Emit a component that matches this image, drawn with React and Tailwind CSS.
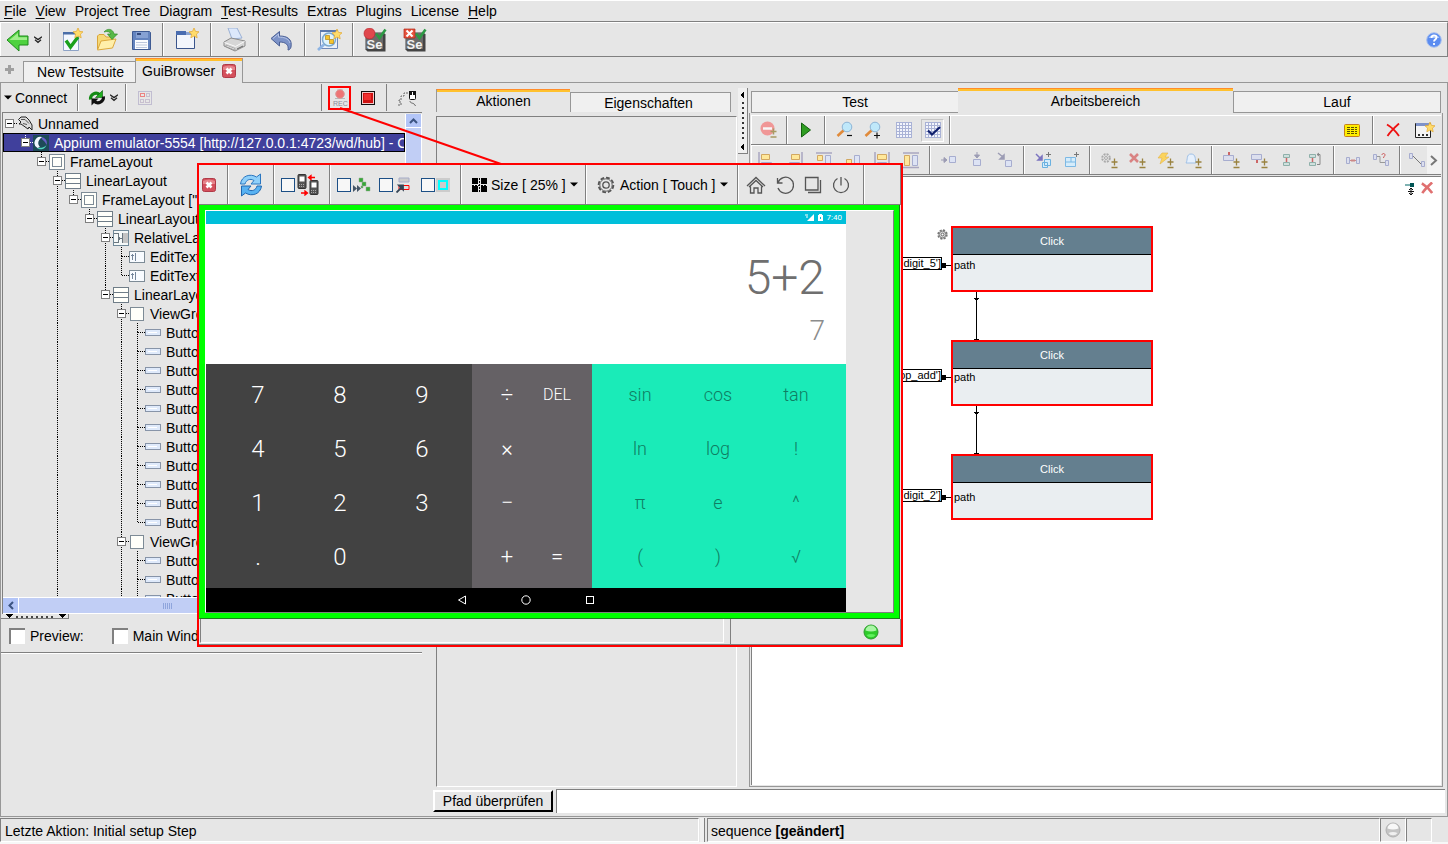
import React from "react";

function Svg({ w = 24, h = 24, vb, children, className = "", crisp = false }) {
  return (
    <svg
      width={w}
      height={h}
      viewBox={vb || `0 0 ${w} ${h}`}
      fill="none"
      shapeRendering={crisp ? "crispEdges" : "auto"}
      className={"shrink-0 " + className}
      aria-hidden="true"
    >
      {children}
    </svg>
  );
}

const STAR = "M5 0l1.5 3.4 3.5.4-2.6 2.4.8 3.6L5 8 1.8 9.8l.8-3.6L0 3.8l3.5-.4z";

function Star({ x, y }) {
  return <path d={STAR} transform={`translate(${x} ${y})`} fill="#ffdc6b" stroke="#e3a62c" strokeWidth=".7" />;
}

/* ---------- main toolbar icons ---------- */
const BackIcon = () => (
  <Svg>
    <path d="M1 12 13 2v6h9v9h-9v6z" fill="#4fd23f" stroke="#1f8a1c" />
    <path d="M3.500 12 12 5v4.200h9V12z" fill="#b4f5a0" opacity=".8" />
  </Svg>
);
const DoubleChevron = () => (
  <Svg w={8} h={8}>
    <path d="M0 .8 4 3.600 8 .8M1 3.800 4 6.400 7 3.800" stroke="#222" strokeWidth="1.300" />
  </Svg>
);
const NewCheckIcon = () => (
  <Svg>
    <path d="M3.500 4.500h15v18h-15z" fill="#f4f8ff" stroke="#8ea3c6" />
    <path d="M3 4h16v2.500H3z" fill="#4a6ea8" />
    <path d="m6 12.500 4.500 6.500L18 9" stroke="#19a01c" strokeWidth="3.400" />
    <Star x={13} y={0} />
  </Svg>
);
const OpenIcon = () => (
  <Svg>
    <path d="M2.500 21V8l1.500-1.500h5L11 9h7v4" fill="#f6d977" stroke="#d9a53a" />
    <path d="M2.500 22 6 13l15-2-3.500 9z" fill="#ffefaa" stroke="#dca83c" />
    <path d="M9 4c3-4 9-3.500 10 2h3.500L17 11.500 12.500 6H16c-1-2.500-4-3-7-2z" fill="#58b947" stroke="#2d8b25" strokeWidth=".7" />
  </Svg>
);
const SaveIcon = () => (
  <Svg>
    <path d="M2.500 3.500h17l1 1v17h-18z" fill="#6484bf" stroke="#3f5b93" />
    <path d="M6 4h12v6H6z" fill="#86a1d3" />
    <path d="M5 12h13v9H5z" fill="#fbfcff" />
    <path d="M6 14.500h11M6 17h11M6 19.500h11" stroke="#bcc7dd" />
    <path d="M7 6h4" stroke="#33497c" strokeWidth="2" />
  </Svg>
);
const NewWindowIcon = () => (
  <Svg>
    <path d="M1.500 4.500h18v16h-18z" fill="#f3f6fc" stroke="#3a558c" />
    <path d="M1 3h10v4H1z" fill="#4a6db0" />
    <path d="M11 4h8v3h-8z" fill="#8da5d2" />
    <Star x={14} y={0} />
  </Svg>
);
const PrinterIcon = () => (
  <Svg>
    <path d="M5 0h9l5 10-10 1z" fill="#dce8fb" stroke="#9ab0d4" />
    <path d="m1 14 7-4 14 3v5l-10 5L1 18z" fill="#d6d6d6" stroke="#8c8c8c" />
    <path d="m1.500 14.500 11 4 9-5" stroke="#fafafa" />
    <path d="m3 17 9 3.500v1.500l-9-3.500z" fill="#f5f5f5" stroke="#888" strokeWidth=".6" />
    <path d="m14 21 6-3" stroke="#666" />
  </Svg>
);
const UndoIcon = () => (
  <Svg>
    <path d="M1 10.500 9.500 3.500V8C17 8 22.500 11 21 19c-.4 2-2 3-3 3C19 17 16 14 9.500 14v4z" fill="#7d93c8" stroke="#4a5f95" />
    <path d="M3 10.500 8.500 6v3.200C14 9 18.500 10.500 20 15" stroke="#b6c4e6" />
  </Svg>
);
const SearchDocIcon = () => (
  <Svg w={26}>
    <path d="M4.500 2.500h17v18h-17z" fill="#eaf0fb" stroke="#7089b8" />
    <path d="M4 2h18v2H4z" fill="#5b78ad" />
    <circle cx="13" cy="11.500" r="6.500" fill="#dff3fc" stroke="#7ba9cf" strokeWidth="1.500" />
    <path d="M9.500 7.500h4v4h-4zM13.500 11.500h4v4h-4z" fill="#f7c52c" stroke="#b88413" strokeWidth=".7" />
    <path d="m8 16.500-6 5.500" stroke="#8db4e4" strokeWidth="2.800" />
    <Star x={16} y={1} />
  </Svg>
);
const SeIcon = ({ stop }) => (
  <Svg>
    <path d="M2.500 4.500h18l2 2v17h-18l-2-2z" fill="#444" />
    <path d="M3 5h17v16H3z" fill="#6a6a6a" />
    <text x="3.500" y="20.500" fontSize="13" fontWeight="bold" fontFamily="Liberation Sans, sans-serif" fill="#f2f2f2">
      Se
    </text>
    {stop ? (
      <>
        <path d="M1 1h11v9H1z" fill="#e5533d" stroke="#b32717" strokeWidth=".7" />
        <path d="m3.500 2.500 6 6M9.500 2.500l-6 6" stroke="#fff" strokeWidth="2" />
      </>
    ) : (
      <circle cx="6.500" cy="5.500" r="5.500" fill="#e0484d" stroke="#b3222a" strokeWidth=".6" />
    )}
    <path d="m13 5.500 3.500 4.500L22.500 1.500" stroke="#2d9a45" strokeWidth="2.600" />
  </Svg>
);
const HelpIcon = () => (
  <Svg w={16} h={16}>
    <circle cx="8" cy="8" r="7.300" fill="#5b8cf0" stroke="#a9c1ef" />
    <path d="M2.500 6a6 5 0 0 1 11 0z" fill="#a9c6fb" />
    <path d="M5.500 6c0-3.500 5-3.500 5-.5 0 2-2.500 2-2.500 4M8 11v2" stroke="#fff" strokeWidth="1.800" />
  </Svg>
);
const CloseBox = () => (
  <Svg w={14} h={14}>
    <rect x=".5" y=".5" width="13" height="13" rx="2" fill="#d4505c" stroke="#b03a48" />
    <path d="M1 3q6-3 12 0v3H1z" fill="#ee9aa0" opacity=".7" />
    <path d="m4.500 4.500 5 5M9.500 4.500l-5 5" stroke="#fff" strokeWidth="2.600" />
  </Svg>
);

/* ---------- connection toolbar icons ---------- */
const Triangle = () => (
  <Svg w={8} h={5}>
    <path d="M0 .5h8L4 4.500z" fill="#000" />
  </Svg>
);
const RefreshGreen = () => (
  <Svg w={18} h={16}>
    <path d="M2.500 9.500C2 4 8 1.500 11.500 4.500" stroke="#148a14" strokeWidth="3.200" />
    <path d="M14.500.5v7H7.500z" fill="#1fae1f" stroke="#0a5a0a" strokeWidth=".6" />
    <path d="M15.500 6.500c.5 5.500-5.500 8-9 5" stroke="#101010" strokeWidth="3" />
    <path d="M3.500 15.500v-7h7z" fill="#101010" />
  </Svg>
);
const GridRed = () => (
  <Svg w={14} h={14} crisp className="opacity-60">
    <path d="M.5.5h13v13H.5z" stroke="#a9a3c4" />
    <path d="M2.500 2.500h4v3h-4z" stroke="#f04040" />
    <path d="M8.500 2.500h3v3h-3zM2.500 8.500h3v3h-3zM7.500 8.500h4v3h-4z" stroke="#b5a6c0" />
  </Svg>
);
const RecIcon = () => (
  <Svg w={16} h={18}>
    <path d="M5 1h6M3 9.500h10" stroke="#b9b9b9" />
    <circle cx="8" cy="5" r="4.300" fill="#ee7474" stroke="#d99" />
    <text x="1" y="16.500" fontSize="7" fontFamily="Liberation Sans, sans-serif" fill="#8c8c98">
      REC
    </text>
  </Svg>
);
const StopIcon = () => (
  <Svg w={14} h={14} crisp>
    <path d="M.5.5h13v13H.5z" fill="#f3c8c8" stroke="#111" />
    <path d="M2 2h10v10H2z" fill="#cf1212" />
    <path d="M3 3h7v6H3z" fill="#f03030" />
  </Svg>
);
const MouseIcon = () => (
  <Svg w={20} h={18}>
    <path d="M1 16h3v-3H2v-2h2V7h3V4h5" stroke="#666" strokeDasharray="2 1" />
    <rect x="12.500" y="2.500" width="6" height="8" rx="1" fill="#fff" stroke="#111" />
    <path d="M12 2h7v4h-7z" fill="#111" />
    <path d="M15.500 3v3" stroke="#fff" />
    <path d="M13 12c0 3 4 1 5.500 5" stroke="#666" />
  </Svg>
);

/* ---------- tree ---------- */
const TREE_ICONS = {
  root: (
    <Svg w={16} h={16}>
      <path d="M1.500 3.500 4 1h5l3 3 3 5v5l-3-3-1 2-7-5H2l2-2z" fill="#ddd" stroke="#222" />
      <path d="M4 3.500h4l4 4M6 7.500l4 1" stroke="#555" />
    </Svg>
  ),
  appium: (
    <Svg w={16} h={16}>
      <path d="M0 0h16v16H0z" fill="#1e4a58" />
      <path d="M8 2a6 6 0 0 1 5.500 8c-1-4-4-4-5.500-8z" fill="#6a5fc8" />
      <path d="M13.500 10A6 6 0 0 1 4 13c3 0 7 0 9.500-3z" fill="#4fd8c0" />
      <path d="M4.500 13A6 6 0 0 1 9 2C5 5 4 9 7 12z" fill="#f3f8ff" />
    </Svg>
  ),
  frame: (
    <Svg w={16} h={16} crisp>
      <path d="M.5.5h15v15H.5z" fill="#fffffa" stroke="#7d8b96" />
      <path d="M3.500 3.500h9v9h-9z" stroke="#7d8b96" />
    </Svg>
  ),
  linear: (
    <Svg w={16} h={16} crisp>
      <path d="M.5.5h15v15H.5zM0 5.500h16M0 10.500h16" fill="#fffffa" stroke="#6f7d88" />
    </Svg>
  ),
  relative: (
    <Svg w={16} h={16} crisp>
      <path d="M.5.5h15v15H.5z" fill="#f4f8f8" stroke="#6f8898" />
      <path d="M10 3h5v10h-5z" fill="#c3c3c3" />
      <path d="M1 3.500h4v9H1M5 8.500h4M9.500 3v10M6.500 7v3" stroke="#6a7780" />
    </Svg>
  ),
  edit: (
    <Svg w={16} h={12} crisp>
      <path d="M.5.5h15v11H.5z" fill="#f8fbff" stroke="#7d8b96" />
      <path d="M3.500 3v6M2 4.500h3M6.500 2v8" stroke="#75869c" />
    </Svg>
  ),
  group: (
    <Svg w={16} h={16} crisp>
      <path d="M1.500 1.500h13v13h-13z" fill="#fffffa" stroke="#7d8b96" />
    </Svg>
  ),
  button: (
    <Svg w={16} h={8} crisp>
      <path d="M.5.5h15v6H.5z" fill="#dfeafb" stroke="#8794a8" />
      <path d="M3 3h9" stroke="#fff" />
    </Svg>
  ),
};

const BUTTON_ROW = { depth: 8, icon: "button", label: "Button", guides: [3, 7], more: true };
const TREE = [
  { depth: 0, icon: "root", label: "Unnamed", open: true, guides: [] },
  { depth: 1, icon: "appium", label: "Appium emulator-5554 [http://127.0.0.1:4723/wd/hub] - C", open: true, guides: [], selected: true },
  { depth: 2, icon: "frame", label: "FrameLayout", open: true, guides: [] },
  { depth: 3, icon: "linear", label: "LinearLayout", open: true, guides: [], more: true },
  { depth: 4, icon: "frame", label: 'FrameLayout ["', open: true, guides: [3] },
  { depth: 5, icon: "linear", label: "LinearLayout", open: true, guides: [3] },
  { depth: 6, icon: "relative", label: "RelativeLayout", open: true, guides: [3], more: true },
  { depth: 7, icon: "edit", label: "EditText", guides: [3, 6], more: true },
  { depth: 7, icon: "edit", label: "EditText", guides: [3, 6] },
  { depth: 6, icon: "linear", label: "LinearLayout", open: true, guides: [3] },
  { depth: 7, icon: "group", label: "ViewGroup", open: true, guides: [3], more: true },
  ...Array.from({ length: 10 }, () => BUTTON_ROW),
  { ...BUTTON_ROW, more: false },
  { depth: 7, icon: "group", label: "ViewGroup", open: true, guides: [3], more: true },
  BUTTON_ROW,
  BUTTON_ROW,
  BUTTON_ROW,
];

function TreeRow({ row, first }) {
  const line = row.selected ? "#fff" : "#000";
  return (
    <div role="treeitem" aria-selected={!!row.selected} className={"flex h-[19px] shrink-0 items-center whitespace-nowrap " + (row.selected ? "bg-[#40409c] text-white outline outline-1 -outline-offset-1 outline-black" : "")}>
      {Array.from({ length: row.depth }, (_, i) => (
        <Svg key={i} w={16} h={19} crisp>
          {row.guides.includes(i) && <path d="M6.500 0v19" stroke="#000" strokeDasharray="1 1" />}
        </Svg>
      ))}
      <Svg w={14} h={19} crisp>
        {!first && <path d="M6.500 0v9" stroke={line} strokeDasharray="1 1" />}
        {row.more && <path d="M6.500 9v10" stroke="#000" strokeDasharray="1 1" />}
        <path d="M7 9.500h7" stroke={line} strokeDasharray="1 1" />
        {row.open && (
          <>
            <path d="M2.500 5.500h8v8h-8z" fill="#fff" stroke="#808080" />
            <path d="M4 9.500h5" stroke="#000" />
          </>
        )}
      </Svg>
      {TREE_ICONS[row.icon]}
      <span className="pl-[5px]">{row.label}</span>
    </div>
  );
}

/* ---------- workspace toolbar icons ---------- */
const RemoveIcon = () => (
  <Svg w={18} h={18} className="opacity-70">
    <circle cx="7.500" cy="7.500" r="7" fill="#f57676" />
    <path d="M3 7.500h9" stroke="#fff" strokeWidth="2.500" />
    <path d="M13.500 7.500v6M10.500 10.500h6M10.500 16h6" stroke="#8f7a2c" strokeWidth="1.500" />
  </Svg>
);
const PlayIcon = () => (
  <Svg w={12} h={16}>
    <path d="M1.500 1v14L10.500 8z" fill="#2f9d22" stroke="#14600f" />
  </Svg>
);
const Zoom = ({ plus }) => (
  <Svg w={18} h={18}>
    <path d="m8 9-6.500 6" stroke="#e08a3a" strokeWidth="2.600" />
    <circle cx="11" cy="6" r="4.800" fill="#bfe8fa" stroke="#8db4d6" />
    <path d={plus ? "M10 14.500h6M13 11.500v6" : "M11 14.500h5"} stroke="#111" strokeWidth="1.200" />
  </Svg>
);
const GridIcon = ({ check }) => (
  <Svg w={16} h={16} crisp>
    <path
      d="M.5.5h15v15H.5zM3.500 0v16M6.500 0v16M9.500 0v16M12.500 0v16M0 3.500h16M0 6.500h16M0 9.500h16M0 12.500h16"
      fill="#f3f5fc"
      stroke="#a9b2d6"
    />
    {check && <path d="m3 8.500 4 4L15 5" stroke="#10206e" strokeWidth="2.200" shapeRendering="auto" />}
  </Svg>
);
const NoteIcon = () => (
  <Svg w={16} h={13}>
    <rect x=".5" y=".5" width="15" height="12" rx="1" fill="#ffee00" stroke="#c47f1e" />
    <path d="M3 3.500h10M3 5.500h10M3 7.500h10M3 9.500h10" stroke="#5c5200" strokeDasharray="3 1" />
  </Svg>
);
const RedX = ({ s = 14, soft }) => (
  <Svg w={s} h={s} vb="0 0 14 14">
    <path d="M1 1.500c5 3 9 7 12 11.500M13 .5C8 5 4 9 1.500 13" stroke={soft ? "#e07070" : "#ee1111"} strokeWidth={soft ? 3 : 1.800} />
  </Svg>
);
const DotsWindow = () => (
  <Svg w={20} h={16}>
    <path d="M.5 1.500h15v14H.5z" fill="#f4f4f4" stroke="#222" />
    <path d="M1 1h14v3H1z" fill="#7f93c9" />
    <path d="M3 12h2v2H3zM7 12h2v2H7zM11 12h2v2h-2z" fill="#333" />
    <Star x={10} y={0} />
  </Svg>
);
const Pm = () => <path d="M13.500 6.500v7M10.500 10h6M10.500 15.500h6" stroke="#9a8340" strokeWidth="1.300" />;
const LAV = "#a7adcf";
const YEL = "#ffe89a";

const ALIGN = [
  <g key="a"><path d="M1 0v16" stroke="#a9a6c0" strokeWidth="1.500" /><path d="M3.500 2.500h8v5h-8z" fill={YEL} stroke="#d2a862" /><path d="M3.500 10.500h10v4h-10z" fill="#dde3f4" stroke={LAV} /></g>,
  <g key="b"><path d="M15 0v16" stroke="#a9a6c0" strokeWidth="1.500" /><path d="M4.500 2.500h8v5h-8z" fill={YEL} stroke="#d2a862" /><path d="M2.500 10.500h10v4h-10z" fill="#dde3f4" stroke={LAV} /></g>,
  <g key="c"><path d="M0 1h16" stroke="#a9a6c0" strokeWidth="1.500" /><path d="M1.500 3.500h5v5h-5z" fill={YEL} stroke="#d2a862" /><path d="M9.500 3.500h5v10h-5z" fill="#dde3f4" stroke={LAV} /></g>,
  <g key="d"><path d="M0 15h16" stroke="#a9a6c0" strokeWidth="1.500" /><path d="M1.500 7.500h5v6h-5z" fill={YEL} stroke="#d2a862" /><path d="M9.500 3.500h5v10h-5z" fill="#dde3f4" stroke={LAV} /></g>,
  <g key="e"><path d="M1 0v16M15 0v16" stroke="#a9a6c0" strokeWidth="1.500" /><path d="M3.500 2.500h9v5h-9z" fill={YEL} stroke="#d2a862" /><path d="M3.500 10.500h9v4h-9z" fill="#dde3f4" stroke={LAV} /></g>,
  <g key="f"><path d="M0 1h16M0 15.500h16" stroke="#a9a6c0" strokeWidth="1.500" /><path d="M1.500 3.500h5v10h-5z" fill={YEL} stroke="#d2a862" /><path d="M9.500 3.500h5v10h-5z" fill="#dde3f4" stroke={LAV} /></g>,
];
const MOVE = [
  <g key="a"><path d="M0 8h5M3 5.500 6 8l-3 2.500z" stroke="#9c9cb4" fill="#9c9cb4" /><path d="M8.500 4.500h6v6h-6z" fill="#dde3f4" stroke={LAV} /></g>,
  <g key="b"><path d="M8 0v4M5.500 3 8 6l2.500-3z" stroke="#9c9cb4" fill="#9c9cb4" /><path d="M4.500 7.500h7v6h-7z" fill="#dde3f4" stroke={LAV} /></g>,
  <g key="c"><path d="m1 1 5 4M7 3v4H3z" stroke="#9c9cb4" strokeWidth="1.500" fill="#9c9cb4" /><path d="M8.500 8.500h6v6h-6z" fill="#dde3f4" stroke={LAV} /></g>,
];
const ADD = [
  <g key="a"><path d="m1 2 4 4M7 4v4H3z" stroke="#7c74c0" strokeWidth="1.500" fill="#7c74c0" /><path d="M13.500 0v5M11 2.500h5" stroke="#777" /><path d="M9.500 7.500h6v6h-6zM7.500 10.500h5v5h-5z" fill="#d5ecfb" stroke="#6bb1e0" /></g>,
  <g key="b"><path d="M2.500 5.500h10v9h-10zM2.500 10h10M8 5.500V10" fill="#d5ecfb" stroke="#7db9e4" /><path d="M13.500 0v5M11 2.500h5" stroke="#777" /></g>,
];
const STEP = [
  <g key="a"><circle cx="5" cy="6" r="3.800" stroke="#aaa" strokeWidth="2" strokeDasharray="2 1" /><circle cx="5" cy="6" r="1.500" stroke="#aaa" /><Pm /></g>,
  <g key="b"><path d="m1 2 8 8M9 2l-8 8" stroke="#d98383" strokeWidth="2.500" /><Pm /></g>,
  <g key="c"><path d="M5 1h6L8 5h4L3 12l2-6H1z" fill="#fbd45e" stroke="#e2b34c" strokeWidth=".6" /><Pm /></g>,
  <g key="d"><path d="M1 11c2-3 0-9 5-9s4 5 5 9z" fill="#e6f0fc" stroke="#9fc0e6" /><Pm /></g>,
];
const LINKS = [
  <g key="a"><path d="M.5 3.500h10v5h-10z" fill="#dcdfee" stroke={LAV} /><path d="M5 0h2v3H5z" fill="#c66" /><Pm /></g>,
  <g key="b"><path d="M.5 2.500h10v5h-10z" fill="#dcdfee" stroke={LAV} /><path d="M5 8h2v3H5z" fill="#c66" /><Pm /></g>,
  <g key="c"><path d="M4.500 2.500h6v3h-6zM4.500 10.500h6v3h-6z" fill="#cfe0dd" stroke="#8fb0aa" /><path d="M7.500 6v4" stroke="#c66" strokeWidth="1.500" /></g>,
  <g key="d"><path d="M2.500 2.500h6v3h-6zM2.500 10.500h6v3h-6z" fill="#cfe0dd" stroke="#8fb0aa" /><path d="M5.500 6v4" stroke="#c66" strokeWidth="1.500" /><path d="M10 2.500h3v10h-3M12 1l-2 1.500L12 4" stroke="#888" /></g>,
];
const WIRES = [
  <g key="a"><path d="M1.500 5.500h3v6h-3zM11.500 5.500h3v6h-3z" fill="#dcdfee" stroke={LAV} /><path d="M5 8.500h6M6.500 7l3 3M9.500 7l-3 3" stroke="#c88" /></g>,
  <g key="b"><path d="M.5 2.500h3v5h-3zM12.500 8.500h3v5h-3z" fill="#dcdfee" stroke={LAV} /><path d="M4 4.500h3v6h5" stroke="#999" /><path d="M9 3c0-2 3-2 3 0 0 1-1.500 1.500-1.500 3" stroke="#c55" /></g>,
];
const LAST = [<g key="a"><path d="M.5 1.500h3v5h-3zM12.500 9.500h3v5h-3z" fill="#dcdfee" stroke={LAV} /><path d="m4 4 8 8" stroke="#777" /></g>];

const NAMES = {
  align: ["Align left", "Align right", "Align top", "Align bottom", "Same width", "Same height"],
  move: ["Move right", "Move down", "Move diagonally"],
  add: ["Insert group", "Insert frame"],
  step: ["Settings", "Error", "Event", "Notify"],
  links: ["Link in", "Link out", "Connect", "Reconnect"],
  wires: ["Cut wire", "Query wire"],
  last: ["Straight wire"],
};

function ToolSet({ icons, names, wide }) {
  return (
    <div className={"flex items-stretch border-l border-r border-l-white border-r-[#808080] " + (wide ? "pr-[3px]" : "px-1")}>
      {icons.map((icon, i) => (
        <button key={i} aria-label={names[i]} className={"flex items-center justify-center " + (wide ? "w-[29px]" : "w-7")}>
          <Svg w={17} h={17}>{icon}</Svg>
        </button>
      ))}
    </div>
  );
}

const group = "flex items-center border-l border-r border-l-white border-r-[#808080] ";
const activeTab = "border-t border-t-[#ff8c2a] shadow-[inset_0_2px_0_#ffc12e] ";

/* ---------- parts ---------- */
const MENU = ["File", "View", "Project Tree", "Diagram", "Test-Results", "Extras", "Plugins", "License", "Help"];
const UNDERLINED = ["File", "View", "Test-Results", "Help"];

function MenuBar() {
  return (
    <nav className="flex h-[22px] shrink-0 items-center gap-[9px] border-t border-b border-t-white border-b-[#808080] pl-1">
      {MENU.map((m) => (
        <button key={m}>{UNDERLINED.includes(m) ? <><u className="underline-offset-2">{m[0]}</u>{m.slice(1)}</> : m}</button>
      ))}
    </nav>
  );
}

function MainToolbar() {
  return (
    <div className="flex h-[35px] shrink-0 items-stretch border-t border-b border-r border-t-white border-b-[#808080] border-r-[#808080]">
      <div className={group + "gap-1 pl-[5px] pr-[7px]"}>
        <button aria-label="Back"><BackIcon /></button>
        <button aria-label="History"><DoubleChevron /></button>
      </div>
      <div className={group + "gap-[11px] pl-[9px] pr-2"}>
        <button aria-label="New test"><NewCheckIcon /></button>
        <button aria-label="Open"><OpenIcon /></button>
        <button aria-label="Save"><SaveIcon /></button>
      </div>
      <div className={group + "px-[11px]"}><button aria-label="New window"><NewWindowIcon /></button></div>
      <div className={group + "px-[11px]"}><button aria-label="Print"><PrinterIcon /></button></div>
      <div className={group + "px-[10px]"}><button aria-label="Undo"><UndoIcon /></button></div>
      <div className={group + "px-[10px]"}><button aria-label="Inspect"><SearchDocIcon /></button></div>
      <div className="flex flex-1 items-center gap-4 border-l border-white pl-[9px] pr-[5px]">
        <button aria-label="Selenium record"><SeIcon /></button>
        <button aria-label="Selenium stop"><SeIcon stop /></button>
        <button aria-label="Help" className="ml-auto"><HelpIcon /></button>
      </div>
    </div>
  );
}

function FileTabs() {
  return (
    <div className="flex h-[26px] shrink-0 items-end">
      <button aria-label="Add tab" className="flex h-full w-[23px] items-center justify-center border-b border-[#979797] pr-1">
        <Svg w={9} h={9} crisp><path d="M3 0h3v3h3v3H6v3H3V6H0V3h3z" fill="#a0a0a0" /></Svg>
      </button>
      <button className="h-[22px] w-[112px] border border-r-0 border-[#979797] bg-[#f0f0f0] pb-px pl-[2px] leading-[18px]">New Testsuite</button>
      <div className={"flex h-[25px] items-center gap-[7px] border-x border-x-[#979797] px-[6px] " + activeTab}>
        <button>GuiBrowser</button>
        <button aria-label="Close tab"><CloseBox /></button>
      </div>
      <div className="h-full flex-1 border-b border-[#979797]" />
    </div>
  );
}

function ConnectBar() {
  return (
    <div className="flex h-[29px] shrink-0 items-stretch py-px">
      <div className="flex items-center gap-[3px] border-r border-[#808080] pl-[3px] pr-[10px]">
        <Triangle />
        <button>Connect</button>
      </div>
      <div className={group + "gap-1 pl-[9px] pr-[7px]"}>
        <button aria-label="Refresh"><RefreshGreen /></button>
        <button aria-label="Refresh options"><DoubleChevron /></button>
      </div>
      <button aria-label="Layout grid" className="border-l border-white pl-[11px]"><GridRed /></button>
      <div className="ml-auto flex items-center gap-[10px] border-l border-[#808080] pl-[6px]">
        <button aria-label="Record" className="flex h-6 w-[23px] items-center justify-center border-2 border-[#ff0000]"><RecIcon /></button>
        <button aria-label="Stop"><StopIcon /></button>
      </div>
      <div className="ml-[11px] flex items-center border-l border-[#808080] pl-[10px] pr-[5px]">
        <button aria-label="Mouse tracking"><MouseIcon /></button>
      </div>
    </div>
  );
}

const bigBox = "h-4 w-4 appearance-none border-l-2 border-t-2 border-[#808080] bg-white";

function LeftPanel() {
  return (
    <section className="flex w-[422px] shrink-0 flex-col border-l border-[#979797]">
      <ConnectBar />
      <div className="ml-px flex min-h-0 flex-1 flex-col border-l border-t border-[#808080] pt-px">
        <div className="flex min-h-0 flex-1">
          <div role="tree" className="flex min-w-0 flex-1 flex-col overflow-hidden">
            {TREE.map((row, i) => <TreeRow key={i} row={row} first={i === 0} />)}
          </div>
          <div className="flex w-[17px] shrink-0 flex-col border-x border-white bg-[#c1cef5]">
            <button aria-label="Scroll up" className="flex h-[14px] items-center justify-center border-b border-white bg-[#b3c5f7]">
              <Svg w={9} h={6}><path d="m1 5 3.500-3.500L8 5" stroke="#3c5482" strokeWidth="2" /></Svg>
            </button>
          </div>
        </div>
        <div className="flex h-[17px] shrink-0 border-y border-white bg-[#c1cef5]">
          <button aria-label="Scroll left" className="flex w-4 items-center justify-center border-r border-white bg-[#b3c5f7]">
            <Svg w={6} h={9}><path d="M5 1 1.500 4.500 5 8" stroke="#3c5482" strokeWidth="2" /></Svg>
          </button>
          <div className="flex flex-1 items-center pl-[144px]">
            <Svg w={9} h={6} crisp><path d="M.5 0v6M2.500 0v6M4.500 0v6M6.500 0v6M8.500 0v6" stroke="#8fa5dc" /></Svg>
          </div>
        </div>
      </div>
      <div className="flex h-[5px] w-[68px] shrink-0 items-start border-b border-r border-[#808080] pl-1">
        <Svg w={62} h={4} crisp>
          <path d="M0 0h8L4 4zM53 0h8l-4 4z" fill="#000" />
          <path d="M11 2.500h40" stroke="#444" strokeWidth="2" strokeDasharray="2 3" />
        </Svg>
      </div>
      <div className="flex h-[33px] shrink-0 items-center gap-7 overflow-hidden whitespace-nowrap pl-2">
        <label className="flex items-center gap-[5px]">
          <input type="checkbox" className={bigBox} />
          Preview:
        </label>
        <label className="flex items-center gap-[5px]">
          <input type="checkbox" className={bigBox} />
          Main Window
        </label>
      </div>
      <div className="h-[164px] shrink-0 border-t border-[#808080]"><div className="h-px bg-white" /></div>
    </section>
  );
}

function MiddlePanel() {
  return (
    <section className="flex w-[301px] shrink-0 flex-col pt-[6px]">
      <div className="flex h-[23px] shrink-0 items-end pr-[6px]">
        <button className={"h-[23px] w-[134px] shrink-0 border-l border-l-[#979797] " + activeTab}>Aktionen</button>
        <button className="h-5 flex-1 border border-b-0 border-[#979797] bg-[#f0f0f0] pr-1 leading-[18px]">Eigenschaften</button>
      </div>
      <div className="mt-1 flex-1 border border-b-white border-l-[#808080] border-r-white border-t-[#808080]" />
    </section>
  );
}

const NODES = [
  { key: "five", label: "'digit_5']", port: "top-[80px]", top: "top-[49px]", pad: "pt-1" },
  { key: "add", label: "'op_add']", port: "top-[192px]", top: "top-[163px]", pad: "pt-[2px]" },
  { key: "two", label: "'digit_2']", port: "top-[312px]", top: "top-[277px]", pad: "pt-2" },
];

function Canvas() {
  return (
    <div className="relative min-h-0 flex-1 overflow-hidden border-l border-t border-[#808080] bg-white text-[11px]">
      <div className="flex justify-end gap-[6px] pr-2 pt-1">
        <button aria-label="Pin"><Svg w={11} h={14}><path d="M1 4h6" stroke="#066" /><path d="M6 2h4v4H6z" fill="#055" /><path d="M7 7v7M4 10.500h6M5 9l2-2 2 2M5 12l2 2 2-2" stroke="#111" /></Svg></button>
        <button aria-label="Close workspace"><RedX s={12} soft /></button>
      </div>
      <svg className="absolute left-0 top-0" width="420" height="360" shapeRendering="crispEdges" aria-hidden="true">
        <path d="M224.500 115v48M224.500 229v48" stroke="#000" />
        <path d="M222 121h5v1h-1v1h-3v-1h-1zM222 235h5v1h-1v1h-3v-1h-1zM222 162h5v1h-5zM222 276h5v1h-5z" fill="#000" />
        <path d="M188 86h6v5h-6zM188 198h6v5h-6zM188 318h6v5h-6z" fill="#000" />
        <path d="M194 88.500h5M194 200.500h5M194 320.500h5" stroke="#000" />
        <g shapeRendering="auto">
          <circle cx="190.500" cy="57.500" r="4.200" fill="#ccc" stroke="#777" strokeWidth="2" strokeDasharray="2 1.300" />
          <circle cx="190.500" cy="57.500" r="3.300" stroke="#888" fill="#ddd" />
          <circle cx="190.500" cy="57.500" r="1.400" fill="#fff" stroke="#666" />
        </g>
      </svg>
      {NODES.map((n) => (
        <React.Fragment key={n.key}>
          <div className={"absolute left-[100px] w-[90px] border border-black bg-white text-right leading-[11px] " + n.port}>{n.label}</div>
          <div className={"absolute left-[199px] flex h-[66px] w-[202px] flex-col border-2 border-[#ff0000] bg-[#eaeef1] " + n.top}>
            <div className="flex h-[27px] items-center justify-center border-b border-black bg-[#647f8f] text-white">Click</div>
            <div className={"pl-px leading-[13px] " + n.pad}>path</div>
          </div>
        </React.Fragment>
      ))}
    </div>
  );
}

function Workspace() {
  return (
    <section className="mr-1 flex min-w-0 flex-1 flex-col pt-[5px]">
      <div className="mx-[2px] flex h-[25px] shrink-0 items-end">
        <button className="h-[22px] flex-3 border border-r-0 border-[#979797] bg-[#f0f0f0] pb-px leading-[18px]">Test</button>
        <button className={"h-[25px] flex-4 pb-px " + activeTab}>Arbeitsbereich</button>
        <button className="h-[22px] flex-3 border border-[#979797] bg-[#f0f0f0] pb-px leading-[18px]">Lauf</button>
      </div>
      <div className="flex min-h-0 flex-1 flex-col border border-t-0 border-[#979797] px-px pb-px pt-[2px]">
        <div className="flex h-[30px] shrink-0 items-stretch border-b border-t border-b-[#808080] border-t-white">
          <div className={group + "px-2"}><button aria-label="Remove"><RemoveIcon /></button></div>
          <div className={group + "px-3"}><button aria-label="Run"><PlayIcon /></button></div>
          <div className={group + "pl-[10px] pr-[5px]"}>
            <button aria-label="Zoom out"><Zoom /></button>
            <button aria-label="Zoom in" className="ml-[10px]"><Zoom plus /></button>
            <button aria-label="Grid" className="ml-[14px]"><GridIcon /></button>
            <button aria-label="Snap to grid" className="ml-[9px] flex h-[23px] w-[23px] items-center justify-center border border-b-white border-l-[#c4c4c4] border-r-white border-t-[#c4c4c4]"><GridIcon check /></button>
          </div>
          <div className={group + "flex-1 justify-end pr-3"}><button aria-label="Note"><NoteIcon /></button></div>
          <div className="flex items-center gap-[15px] border-l border-white pl-3 pr-[6px]">
            <button aria-label="Delete"><RedX /></button>
            <button aria-label="New panel"><DotsWindow /></button>
          </div>
        </div>
        <div className="mb-px flex h-[30px] shrink-0 items-stretch overflow-hidden border-b border-t border-b-[#808080] border-t-white">
          <ToolSet icons={ALIGN} names={NAMES.align} wide />
          <ToolSet icons={MOVE} names={NAMES.move} />
          <ToolSet icons={ADD} names={NAMES.add} />
          <ToolSet icons={STEP} names={NAMES.step} />
          <ToolSet icons={LINKS} names={NAMES.links} />
          <ToolSet icons={WIRES} names={NAMES.wires} />
          <div className="flex flex-1 items-center overflow-hidden border-l border-white pl-2">
            <button aria-label={NAMES.last[0]}><Svg w={17} h={17}>{LAST[0]}</Svg></button>
          </div>
          <button aria-label="More tools" className="flex w-[14px] items-center justify-center bg-[#f2f2f2]">
            <Svg w={8} h={11}><path d="m1 1 5 4.500L1 10" stroke="#777" strokeWidth="2" /></Svg>
          </button>
        </div>
        <Canvas />
      </div>
    </section>
  );
}

function Splitter() {
  return (
    <div className="mx-px mt-[5px] h-[66px] w-[10px] shrink-0 border-b border-r border-[#808080] bg-[#f0f0f0]">
      <Svg w={8} h={64} crisp>
        <path d="M6 3v8L2 7zM6 55v8l-4-4z" fill="#000" />
        <path d="M5 14v38" stroke="#333" strokeWidth="2" strokeDasharray="2 3" />
      </Svg>
    </div>
  );
}

/* ---------- recorder window ---------- */
const box = "h-[14px] w-[14px] shrink-0 appearance-none border border-[#1c4f86] bg-[#f7f7f7]";

function Keys({ keys, className }) {
  return (
    <div className={"grid grid-rows-4 py-1 font-light " + className}>
      {keys.map((k, i) =>
        k ? <button key={i} className="flex items-center justify-center">{k}</button> : <span key={i} />
      )}
    </div>
  );
}

function Calculator() {
  return (
    <div className="flex w-[640px] flex-col font-[Roboto,sans-serif]">
      <div className="flex h-[13px] items-center justify-end gap-1 bg-[#00bfda] pr-1 text-[8px] leading-none text-white">
        <Svg w={9} h={7}><path d="M9 0v7H2z" fill="#fff" /><path d="M0 1h3M1 3h2" stroke="#fff" /></Svg>
        <Svg w={5} h={7}><path d="M0 1h5v6H0zM1 0h3v1H1z" fill="#fff" /><path d="M2 3h1v2H2z" fill="#00bfda" /></Svg>
        7:40
      </div>
      <div className="flex h-[140px] flex-col items-end bg-white pr-[21px] font-light text-[#6f6f6f]">
        <div className="mt-6 text-[48px] leading-[60px]">5+2</div>
        <div className="mt-1 text-[28px] leading-[38px] text-[#8c8c8c]">7</div>
      </div>
      <div className="flex h-56">
        <Keys keys={["7", "8", "9", "4", "5", "6", "1", "2", "3", ".", "0", ""]} className="w-[266px] grid-cols-3 bg-[#424242] pl-[11px] pr-[9px] text-[24px] text-white" />
        <div className="w-[120px] bg-[#656165]">
          <Keys
            keys={["÷", <span key="d" className="text-[16px]">DEL</span>, "×", "", "−", "", "+", "="]}
            className="h-full grid-cols-2 px-[10px] text-[22px] text-white"
          />
        </div>
        <Keys keys={["sin", "cos", "tan", "ln", "log", "!", "π", "e", "^", "(", ")", "√"]} className="flex-1 grid-cols-3 bg-[#1aebb8] pl-[9px] pr-[11px] text-[18px] text-[#0f7d63]" />
      </div>
      <div className="flex h-6 items-center justify-center gap-[54px] bg-black">
        <button aria-label="Back"><Svg w={10} h={10}><path d="M8.500 1v8L1.500 5z" stroke="#fff" /></Svg></button>
        <button aria-label="Home"><Svg w={10} h={10}><circle cx="5" cy="5" r="4.200" stroke="#fff" /></Svg></button>
        <button aria-label="Overview"><Svg w={10} h={10}><rect x="1.500" y="1.500" width="7" height="7" stroke="#fff" /></Svg></button>
      </div>
    </div>
  );
}

function Led({ green }) {
  return (
    <Svg w={16} h={16}>
      <circle cx="8" cy="8" r="7" fill={green ? "#2ecb2a" : "#c4c4c4"} stroke={green ? "#2c9a2c" : "#b0b0b0"} />
      <path d="M2.500 6.500a5.500 5 0 0 1 11 0q-5.500 2-11 0z" fill={green ? "#a9f5a5" : "#f8f8f8"} />
      <path d="M3.500 11a5 4 0 0 0 9 0q-4.500-2-9 0z" fill={green ? "#5ff05c" : "#f0f0f0"} />
    </Svg>
  );
}

function RecorderWindow() {
  const stroke = { stroke: "#555", strokeWidth: 1.3 };
  return (
    <div role="dialog" aria-label="Recorder" className="absolute left-[197px] top-[163px] w-[706px] border-2 border-[#ff0000] bg-[#e6e6e6]">
      <div className="flex h-10 items-stretch border-b border-r border-[#808080]">
        <div className="flex w-[29px] items-center border-r border-[#808080] pl-[3px]"><button aria-label="Close"><CloseBox /></button></div>
        <div className={group + "w-[46px] justify-center"}>
          <button aria-label="Reload">
            <Svg w={24} h={24}>
              <path d="M1.500 11C2.500 3 11 0 17.500 4L21.500 1v10h-9.500L15 7.500C11 5 7 7 6 11z" fill="#8fd0fa" stroke="#2a76c0" />
              <path d="M22.500 13c-1 8-9.500 11-16 7l-4 3V13H12l-3 3.500c4 2.500 8 .5 9-3.500z" fill="#58b2f2" stroke="#2068b0" />
            </Svg>
          </button>
        </div>
        <div className={group + "w-[56px] gap-[2px] pl-[6px]"}>
          <input type="checkbox" aria-label="Swap devices" className={box} />
          <Svg w={22} h={22}>
            <rect x="1" y=".5" width="8" height="14" rx="1" fill="#555" stroke="#333" />
            <path d="M2.500 2.500h5v5h-5z" fill="#fff" />
            <path d="M2 10.500h6M2 12.500h6" stroke="#aaa" strokeDasharray="1 1" />
            <rect x="13" y="6.500" width="8" height="14" rx="1" fill="#555" stroke="#333" />
            <path d="M14.500 8.500h5v5h-5z" fill="#fff" />
            <path d="M14 16.500h6M14 18.500h6" stroke="#aaa" strokeDasharray="1 1" />
            <path d="M18 3.500h-5M14 1.500 11.500 3.500l2.500 2zM4 19h5M8 17l2.500 2L8 21z" fill="#f00" stroke="#f00" strokeWidth="1.300" />
          </Svg>
        </div>
        <div className={group + "w-[131px] pl-[6px]"}>
          <input type="checkbox" aria-label="Follow tree" className={box} />
          <Svg w={18} h={16} className="ml-[2px]">
            <path d="m0 8 4 3.500L0 15zM4 8l4 3.500L4 15z" fill="#456" />
            <path d="M6 1h4v4H6zM9 5h4v4H9zM13 10h4v4h-4zM8 9h2v2H8z" fill="#36a836" stroke="#9a9" strokeWidth=".5" />
          </Svg>
          <input type="checkbox" aria-label="Pick element" className={"ml-2 " + box} />
          <Svg w={14} h={16} className="ml-[3px]">
            <path d="M3 1h10v4H3z" fill="#ccc" stroke="#a6acc8" />
            <path d="M3 8.500h10v4H3z" fill="#ddd" stroke="#f00" />
            <path d="M.5 15.500 6 10M3 8.500h4v4z" stroke="#345" strokeWidth="1.800" fill="#345" />
          </Svg>
          <input type="checkbox" aria-label="Highlight" className={"ml-[11px] " + box} />
          <Svg w={14} h={14} crisp className="ml-px"><path d="M0 0h14v14H0z" fill="#ccc" /><path d="M3 3h8v8H3z" stroke="#0ff" strokeWidth="2" /></Svg>
        </div>
        <div className={group + "w-[125px] gap-1 whitespace-nowrap pl-[10px]"}>
          <Svg w={15} h={14} crisp>
            <path d="M0 0h6v6H0zM9 0h6v6H9zM0 8h6v6H0zM9 8h6v6H9z" fill="#000" />
            <path d="M0 7.500h15M7.500 0v14" stroke="#000" strokeDasharray="2 1" />
          </Svg>
          <button>Size [ 25% ]</button>
          <Triangle />
        </div>
        <div className={group + "w-[152px] gap-[5px] whitespace-nowrap pl-[10px]"}>
          <Svg w={18} h={18}>
            <circle cx="9" cy="9" r="7.300" {...stroke} strokeDasharray="3.800 1.900" strokeWidth="2" />
            <circle cx="9" cy="9" r="6.200" stroke="#666" fill="#e6e6e6" />
            <circle cx="9" cy="9" r="3.200" {...stroke} />
          </Svg>
          <button>Action [ Touch ]</button>
          <Triangle />
        </div>
        <div className={group + "w-[126px] gap-[10px] pl-[7px]"}>
          <button aria-label="Home">
            <Svg w={20} h={18}><path d="m1 10 9-8.500 9 8.500M3 11l7-6.500 7 6.500M4.500 10.500v6.500H8v-5h4v5h3.500v-6.500" {...stroke} /></Svg>
          </button>
          <button aria-label="Rotate">
            <Svg w={18} h={18}><path d="M1.500 2v5h5M2 6.500A8 8 0 1 1 2 12" {...stroke} /></Svg>
          </button>
          <button aria-label="Windows">
            <Svg w={18} h={18}><path d="M1.500 1.500h12.500v12.500H1.500zM16.500 4v12.500H4" {...stroke} /></Svg>
          </button>
          <button aria-label="Power">
            <Svg w={18} h={18}><path d="M9 1v8.500M5.500 2.500a7.500 7.500 0 1 0 7 0" {...stroke} /></Svg>
          </button>
        </div>
        <div className="flex-1 border-l border-white" />
      </div>
      <div className="mr-px border-b border-l border-r border-b-[#1f7a1f] border-l-[#00ff00] border-r-[#1f7a1f]">
        <div className="border-[5px] border-[#00ff00]">
          <div className="border border-b-[#808080] border-l-white border-r-[#808080] border-t-white">
            <Calculator />
          </div>
        </div>
      </div>
      <div className="flex h-[26px] items-stretch border-b border-r border-[#808080]">
        <div className="mb-px ml-px w-[524px] border-b border-l border-r border-b-white border-l-[#808080] border-r-white" />
        <div className="ml-[6px] flex flex-1 items-center justify-end border-l border-[#808080] pr-[21px]"><Led green /></div>
      </div>
    </div>
  );
}

function StatusBar() {
  const cell = "border-l border-t border-r border-b border-l-[#808080] border-t-[#808080] border-r-white border-b-white ";
  return (
    <footer className="shrink-0 border-t border-[#979797] pt-px">
      <div className="flex h-6 items-stretch">
        <div className={cell + "w-[699px] pl-1 leading-6"}>Letzte Aktion: Initial setup Step</div>
        <div className="mx-px w-[5px] border-r border-[#808080] bg-[#f0f0f0]" />
        <div className={cell + "ml-px min-w-0 flex-1 pl-[3px] leading-6"}>sequence <b>[geändert]</b></div>
        <div className={cell + "flex w-[26px] items-center justify-center"}><Led /></div>
        <div className={cell + "w-[26px]"} />
        <div className="w-4" />
      </div>
      <div className="h-[2px] bg-[#f7f7f7]" />
    </footer>
  );
}

export default function App() {
  return (
    <div className="relative flex h-screen flex-col overflow-hidden bg-[#e6e6e6] font-['Liberation_Sans',Arial,sans-serif] text-[14px] leading-[18px] text-black">
      <MenuBar />
      <MainToolbar />
      <FileTabs />
      <main className="flex min-h-0 flex-1 border-r border-[#979797]">
        <LeftPanel />
        <div className="flex min-w-0 flex-1 flex-col pb-[3px]">
          <div className="flex min-h-0 flex-1 pl-[14px]">
            <MiddlePanel />
            <Splitter />
            <Workspace />
          </div>
          <div className="mt-[2px] flex h-6 shrink-0 items-stretch gap-[3px] pl-[11px] pr-[2px]">
            <button className="my-px w-[120px] border-2 border-b-black border-l-white border-r-black border-t-white leading-[18px]">Pfad überprüfen</button>
            <input aria-label="Pfad" className="min-w-0 flex-1 border-l border-t border-[#808080] bg-white px-1 outline-none" />
          </div>
        </div>
      </main>
      <StatusBar />
      <RecorderWindow />
      <svg className="pointer-events-none absolute left-[330px] top-[100px]" width="180" height="66" aria-hidden="true">
        <path d="M10 8 171 64" stroke="#f00" strokeWidth="2" />
      </svg>
    </div>
  );
}
